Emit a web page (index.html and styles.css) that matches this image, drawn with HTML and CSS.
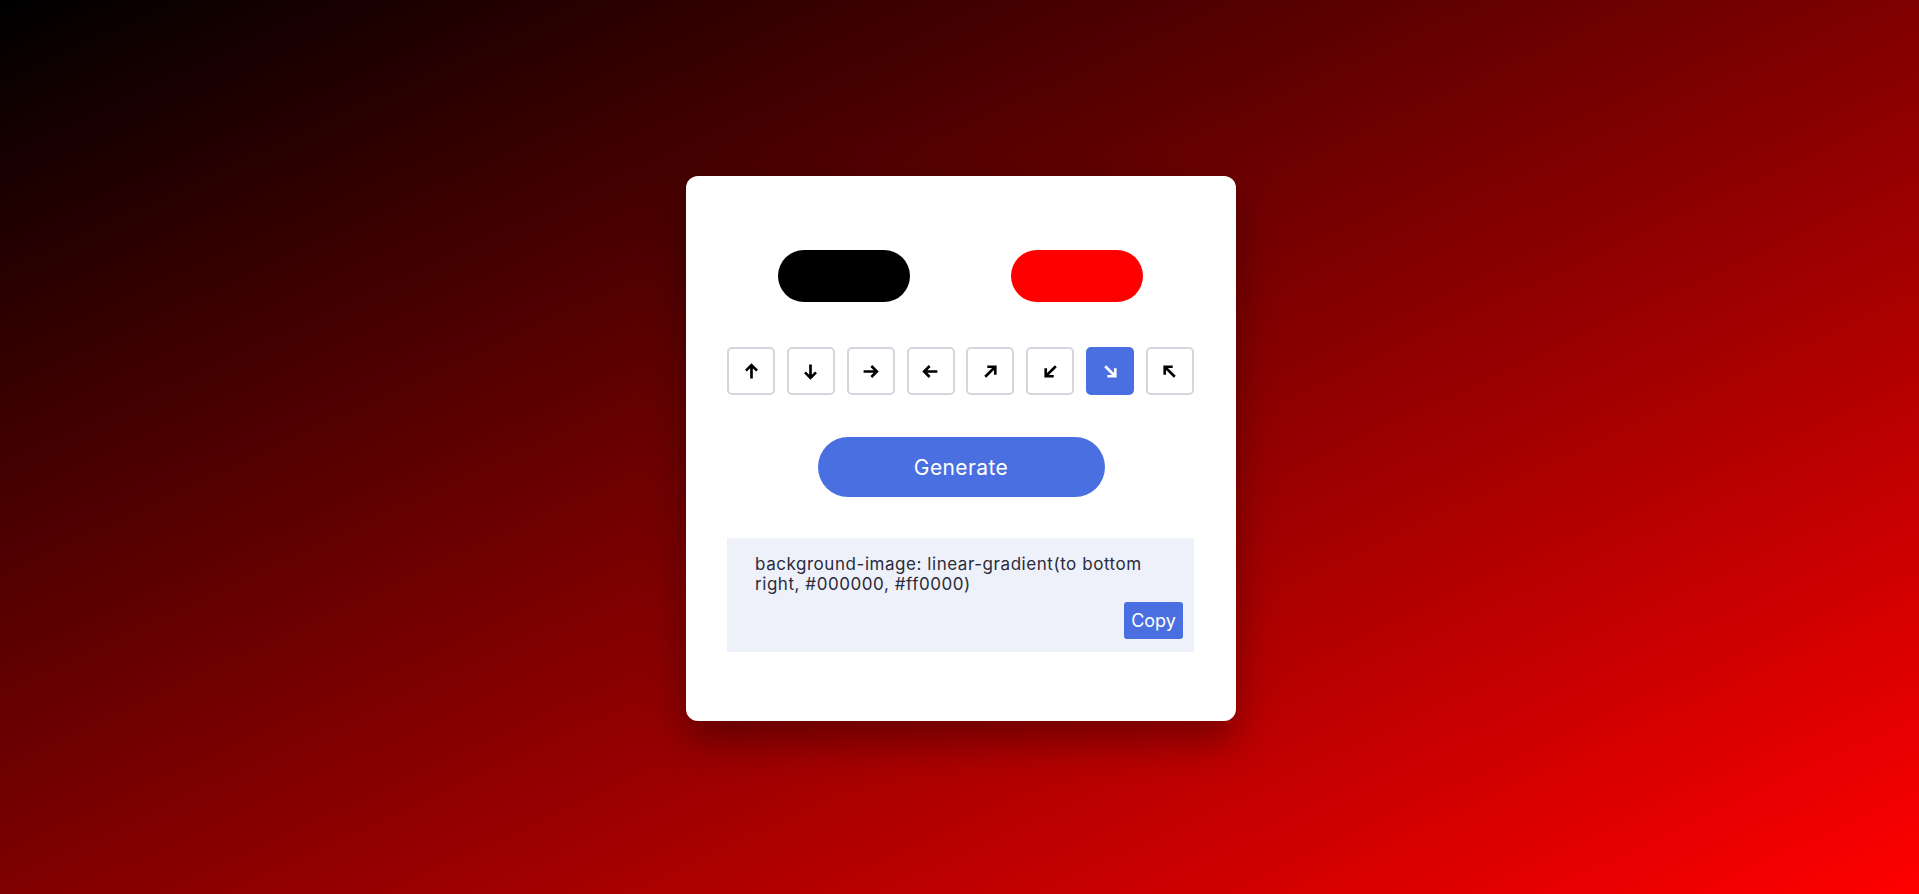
FILE: index.html
```html
<!DOCTYPE html>
<html>
<head>
<meta charset="utf-8">
<link rel="stylesheet" href="styles.css">
</head>
<body>
<div class="card">
  <div class="colors">
    <div class="pill pill-black"></div>
    <div class="pill pill-red"></div>
  </div>
  <div class="dirs">
    <button class="dir"><svg viewBox="0 0 16 16"><path d="M8 14.5V2M2.8 7.2L8 2L13.2 7.2"/></svg></button>
    <button class="dir"><svg viewBox="0 0 16 16"><path d="M8 1.5V14M2.8 8.8L8 14L13.2 8.8"/></svg></button>
    <button class="dir"><svg viewBox="0 0 16 16"><path d="M1.5 8H14M8.8 2.8L14 8L8.8 13.2"/></svg></button>
    <button class="dir"><svg viewBox="0 0 16 16"><path d="M14.5 8H2M7.2 2.8L2 8L7.2 13.2"/></svg></button>
    <button class="dir"><svg viewBox="0 0 16 16"><path d="M3 13L12.5 3.5M5 3.5H12.5V11"/></svg></button>
    <button class="dir"><svg viewBox="0 0 16 16"><path d="M13 3L3.5 12.5M3.5 5V12.5H11"/></svg></button>
    <button class="dir active"><svg viewBox="0 0 16 16"><path d="M3 3L12.5 12.5M12.5 5V12.5H5"/></svg></button>
    <button class="dir"><svg viewBox="0 0 16 16"><path d="M13 13L3.5 3.5M3.5 11V3.5H11"/></svg></button>
  </div>
  <div class="gen-row">
    <button class="generate">Generate</button>
  </div>
  <div class="code">
    <p class="code-text">background-image: linear-gradient(to bottom right, #000000, #ff0000)</p>
    <div class="copy-row"><button class="copy">Copy</button></div>
  </div>
</div>
</body>
</html>
```

FILE: styles.css
```css
* { box-sizing: border-box; }
html, body { margin: 0; height: 100%; }
body {
  background-image: linear-gradient(to bottom right, #000000, #ff0000);
  font-family: Inter, "Noto Sans", sans-serif;
  display: flex;
  justify-content: center;
  align-items: flex-start;
  padding-top: 176px;
  padding-left: 3px;
}
.card {
  width: 550px;
  height: 545px;
  background: #fff;
  border-radius: 12px;
  padding: 74px 42px 0 41px;
  box-shadow: 0 20px 40px rgba(0,0,0,0.35);
}
.colors {
  display: flex;
  justify-content: space-around;
}
.pill {
  width: 132px;
  height: 52px;
  border-radius: 26px;
}
.pill-black { background: #000; }
.pill-red { background: #ff0000; }
.dirs {
  display: flex;
  justify-content: space-between;
  margin-top: 45px;
}
.dir {
  width: 48px;
  height: 48px;
  border: 2px solid #d5d5dd;
  border-radius: 5px;
  background: #fff;
  padding: 0;
  display: flex;
  align-items: center;
  justify-content: center;
}
.dir svg {
  width: 17px;
  height: 17px;
  fill: none;
  stroke: #000;
  stroke-width: 2.5;
}
.dir.active {
  background: #4a6fe0;
  border-color: #4a6fe0;
}
.dir.active svg { stroke: #fff; }
.gen-row {
  display: flex;
  justify-content: center;
  margin-top: 42px;
}
.generate {
  width: 287px;
  height: 60px;
  border: none;
  border-radius: 30px;
  background: #4a6fe0;
  color: #fff;
  font-family: Inter, "Noto Sans", sans-serif;
  font-size: 21px;
  letter-spacing: 0.4px;
  margin-left: 1px;
}
.code {
  margin-top: 41px;
  background: #eef1fa;
  height: 114px;
  padding: 16px 11px 0 28px;
}
.code-text {
  margin: 0;
  font-size: 17px;
  letter-spacing: 0.55px;
  line-height: 20px;
  color: #2b2b3b;
  padding-right: 14px;
}
.copy-row {
  display: flex;
  justify-content: flex-end;
  margin-top: 8px;
}
.copy {
  width: 59px;
  height: 37px;
  border: none;
  border-radius: 3px;
  background: #4a6fe0;
  color: #fff;
  font-family: Inter, "Noto Sans", sans-serif;
  font-size: 18px;
  padding: 0;
}
```
